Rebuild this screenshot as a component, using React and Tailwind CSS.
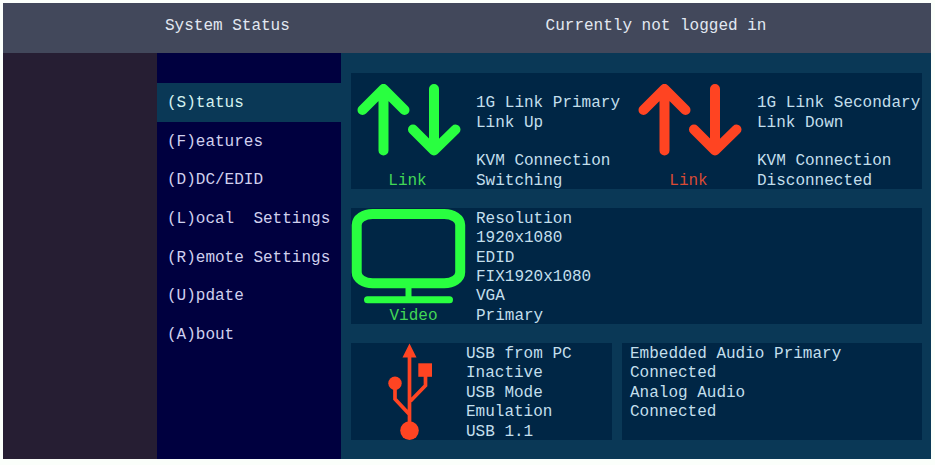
import { useState } from "react";

const MENU = [
  "(S)tatus",
  "(F)eatures",
  "(D)DC/EDID",
  "(L)ocal  Settings",
  "(R)emote Settings",
  "(U)pdate",
  "(A)bout",
];

export default function App() {
  const [active, setActive] = useState("(S)tatus");

  return (
    <div className="min-h-screen flex flex-col bg-[#fbfffb] pt-[3px] pl-[3px] pr-1 pb-1.5 font-['Liberation_Mono',monospace] text-base leading-[23px] text-[#c3dfec]">
      <header className="grid grid-cols-[154px_184px_1fr] items-center bg-[#42485b] h-[50px] pb-1 text-[#e2e8f2]">
        <h1 className="col-start-2 pl-2">System Status</h1>
        <p className="pl-10 text-center">Currently not logged in</p>
      </header>

      <div className="flex-1 grid grid-cols-[154px_184px_1fr] bg-[#0a3856]">
        <div className="bg-[#261e33]" />

        <nav className="bg-[#00003f] pt-[30px]">
          <ul className="grid grid-rows-7 h-[271px]">
            {MENU.map((item) => (
              <li key={item} className="flex">
                <button
                  onClick={() => setActive(item)}
                  className={`w-full text-left whitespace-pre pl-2.5 pt-0.5 ${item === active ? "bg-[#0a3856] text-[#d5f2f0]" : "text-[#d0d0ee]"}`}
                >
                  {item}
                </button>
              </li>
            ))}
          </ul>
        </nav>

        <main className="flex flex-col gap-[19px] pt-5 pl-2.5 pr-[9px] pb-[18px]">
          <Panel className="grid grid-cols-[281px_1fr] min-h-[116px]">
            <LinkStatus up lines={["", "1G Link Primary", "Link Up", "", "KVM Connection", "Switching"]} />
            <LinkStatus lines={["", "1G Link Secondary", "Link Down", "", "KVM Connection", "Disconnected"]} />
          </Panel>

          <Panel className="flex min-h-[116px]">
            <div className="w-[125px] shrink-0 flex flex-col text-[#29ff40]">
              <MonitorIcon />
              <span className="h-[19px] text-center text-[#42d855]">Video</span>
            </div>
            <Lines lines={["Resolution", "1920x1080", "EDID", "FIX1920x1080", "VGA", "Primary"]} />
          </Panel>

          <div className="grid grid-cols-[261px_1fr] gap-2.5">
            <Panel className="flex min-h-[97px]">
              <div className="w-[115px] shrink-0 text-[#ff4422]">
                <UsbIcon />
              </div>
              <Lines lines={["USB from PC", "Inactive", "USB Mode", "Emulation", "USB 1.1"]} />
            </Panel>
            <Panel className="flex min-h-[97px] pl-2">
              <Lines lines={["Embedded Audio Primary", "Connected", "Analog Audio", "Connected", ""]} />
            </Panel>
          </div>
        </main>
      </div>
    </div>
  );
}

function Panel({ className, children }) {
  return <section className={`bg-[#002645] ${className}`}>{children}</section>;
}

// empty strings keep their row, so the text lines up with the panel height
function Lines({ lines }) {
  return (
    <div className="grid auto-rows-fr whitespace-nowrap">
      {lines.map((line, i) => (
        <p key={i} className="h-[19px]">{line}</p>
      ))}
    </div>
  );
}

function LinkStatus({ up, lines }) {
  return (
    <div className="flex">
      <div className={`w-[125px] shrink-0 flex flex-col ${up ? "text-[#29ff40]" : "text-[#ff4422]"}`}>
        <ArrowsIcon />
        <span className={`w-[113px] h-[19px] text-center ${up ? "text-[#42d855]" : "text-[#d84a34]"}`}>Link</span>
      </div>
      <Lines lines={lines} />
    </div>
  );
}

function ArrowsIcon() {
  return (
    <svg width="116" height="97" viewBox="0 0 116 97" fill="none" stroke="currentColor" strokeWidth="10" strokeLinecap="round" strokeLinejoin="round" aria-hidden="true">
      <path d="M32.5 77.5V16M11.5 37L32.5 16L53.5 37" />
      <path d="M83 16V77.5M62 56.5L83 77.5L104.500 56.5" />
    </svg>
  );
}

function MonitorIcon() {
  return (
    <svg width="116" height="97" viewBox="0 0 116 97" fill="none" stroke="currentColor" aria-hidden="true">
      <rect x="5.700" y="6" width="103.500" height="69.300" rx="16" ry="11" strokeWidth="10" />
      <path d="M57.500 79V90" strokeWidth="6" />
      <path d="M16.500 91.700H98.500" strokeWidth="7" strokeLinecap="round" />
    </svg>
  );
}

function UsbIcon() {
  return (
    <svg width="115" height="97" viewBox="0 0 115 97" fill="currentColor" aria-hidden="true">
      <path d="M58.500 0.500L65.500 14.500H51.500Z" />
      <rect x="67.300" y="20.300" width="13.700" height="13.500" />
      <circle cx="44" cy="40.300" r="6.700" />
      <circle cx="58.500" cy="87.600" r="9.300" />
      <path d="M58.500 12V80M74.500 33V42.500L59.500 58M44 45V56L58.500 71.500" fill="none" stroke="currentColor" strokeWidth="3.700" />
    </svg>
  );
}
